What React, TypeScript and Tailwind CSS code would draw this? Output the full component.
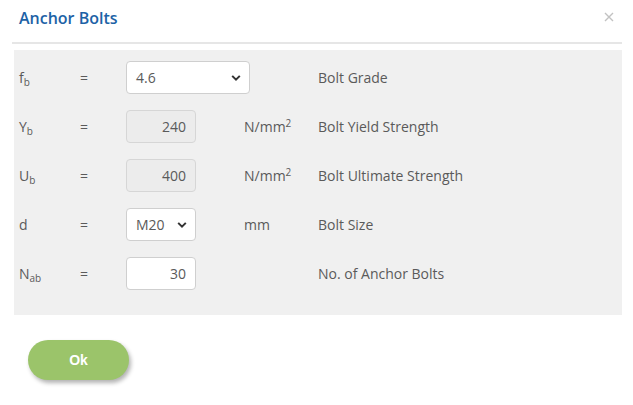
import type { ReactNode } from 'react'

function Chevron() {
  return (
    <svg
      className="pointer-events-none absolute right-[8px] top-1/2 -translate-y-1/2"
      width="10"
      height="7"
      viewBox="0 0 10 7"
    >
      <path d="M1.2 1.4 L5 5.2 L8.8 1.4" fill="none" stroke="#333" strokeWidth="2" />
    </svg>
  )
}

interface RowProps {
  sym: string
  sub: string
  control: ReactNode
  unit?: boolean
  unitText?: string
  desc: string
}

function Row({ sym, sub, control, unit, unitText, desc }: RowProps) {
  return (
    <div className="flex h-[33px] items-center">
      <div className="w-[66px] shrink-0 pl-[5px]">
        {sym}
        <sub className="text-[10px]">{sub}</sub>
      </div>
      <div className="w-[46px] shrink-0">=</div>
      <div className="w-[118px] shrink-0">{control}</div>
      <div className="w-[74px] shrink-0">
        {unit ? (
          <span>
            N/mm<sup className="text-[10px]">2</sup>
          </span>
        ) : (
          unitText
        )}
      </div>
      <div>{desc}</div>
    </div>
  )
}

function ReadOnlyBox({ value }: { value: string }) {
  return (
    <div className="flex h-[33px] w-[70px] items-center justify-end rounded-[4px] border border-[#d6d6d6] bg-[#ececec] pr-[9px] text-[#5a5a5a]">
      {value}
    </div>
  )
}

function SelectBox({ value, width }: { value: string; width: string }) {
  return (
    <div className={`relative h-[33px] ${width} rounded-[4px] border border-[#cfcfcf] bg-white`}>
      <div className="flex h-full items-center pl-[9px] text-[#5a5a5a]">{value}</div>
      <Chevron />
    </div>
  )
}

export default function App() {
  return (
    <div
      className="h-[405px] w-[633px] bg-white text-[14px] text-[#5a5a5a]"
      style={{ fontFamily: '"Open Sans", sans-serif' }}
    >
      <div className="flex h-[42px] items-start justify-between pl-[19px] pr-[19px] pt-[6px]">
        <h1 className="text-[16px] font-semibold text-[#1d62a6]">Anchor Bolts</h1>
        <svg className="mt-[6px]" width="10" height="10" viewBox="0 0 10 10">
          <path d="M1 1 L9 9 M9 1 L1 9" stroke="#c2c2c2" strokeWidth="1.4" />
        </svg>
      </div>
      <div className="ml-[12px] mr-[11px] h-[2px] bg-[#e6e6e6]" />
      <div className="ml-[14px] mr-[11px] mt-[6px] flex flex-col gap-[16px] bg-[#f0f0f0] pb-[25px] pt-[11px]">
        <Row
          sym="f"
          sub="b"
          control={<SelectBox value="4.6" width="w-[124px]" />}
          desc="Bolt Grade"
        />
        <Row sym="Y" sub="b" control={<ReadOnlyBox value="240" />} unit desc="Bolt Yield Strength" />
        <Row sym="U" sub="b" control={<ReadOnlyBox value="400" />} unit desc="Bolt Ultimate Strength" />
        <Row
          sym="d"
          sub=""
          control={<SelectBox value="M20" width="w-[70px]" />}
          unitText="mm"
          desc="Bolt Size"
        />
        <Row
          sym="N"
          sub="ab"
          control={
            <div className="flex h-[33px] w-[70px] items-center justify-end rounded-[4px] border border-[#cfcfcf] bg-white pr-[9px]">
              30
            </div>
          }
          desc="No. of Anchor Bolts"
        />
      </div>
      <div className="pl-[28px] pt-[25px]">
        <button
          className="h-[40px] w-[101px] rounded-full bg-[#9bc46a] text-[14px] font-bold text-white shadow-[2px_3px_4px_rgba(0,0,0,0.3)]"
          style={{ fontFamily: '"Liberation Sans", Arial, sans-serif' }}
        >
          Ok
        </button>
      </div>
    </div>
  )
}
